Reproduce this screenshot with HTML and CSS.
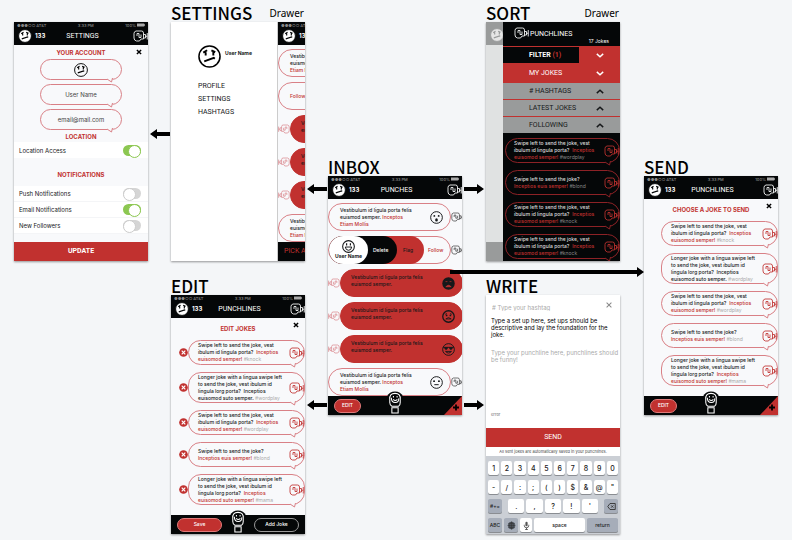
FILE: index.html
```
<!DOCTYPE html>
<html lang="en">
<head>
<meta charset="utf-8">
<title>Punchlines app flow</title>
<link rel="stylesheet" href="styles.css">
</head>
<body>
<svg class="defs" aria-hidden="true">
  <symbol id="meh" viewBox="0 0 24 24"><circle cx="12" cy="12" r="11" fill="var(--face,none)" stroke="currentColor" stroke-width="1.6"/><path d="M5.500 8l4-2.500M14 5.500l4 2M6.500 17l10-3.500 1 .8M8 7.500v3.500M16 7v4" fill="none" stroke="currentColor" stroke-width="2"/></symbol>
  <symbol id="smile" viewBox="0 0 24 24"><circle cx="12" cy="12" r="10.800" fill="none" stroke="currentColor" stroke-width="2"/><path d="M6 13h12q-1 6-6 6t-6-6z" fill="none" stroke="currentColor" stroke-width="1.800"/><path d="M8.500 6v4M15.500 6v4" stroke="currentColor" stroke-width="2.200"/></symbol>
  <symbol id="wow" viewBox="0 0 24 24"><circle cx="12" cy="12" r="10.800" fill="none" stroke="currentColor" stroke-width="1.800"/><ellipse cx="12" cy="16.500" rx="2.500" ry="3" fill="currentColor"/><circle cx="8" cy="9" r="1.700" fill="currentColor"/><circle cx="16" cy="9" r="1.700" fill="currentColor"/></symbol>
  <symbol id="flat" viewBox="0 0 24 24"><circle cx="12" cy="12" r="10.800" fill="none" stroke="currentColor" stroke-width="1.800"/><path d="M8 16h8" stroke="currentColor" stroke-width="1.800"/><circle cx="7.500" cy="9.500" r="1.800" fill="currentColor"/><circle cx="16.500" cy="9.500" r="1.800" fill="currentColor"/></symbol>
  <symbol id="dark" viewBox="0 0 24 24"><circle cx="12" cy="12" r="11.500" fill="currentColor"/><path d="M6.500 8.500h3.500M14 8.500h3.500M7 18q5-5.500 10 0z" fill="#c1312f" stroke="#c1312f" stroke-width="1.300"/></symbol>
  <symbol id="worried" viewBox="0 0 24 24"><circle cx="12" cy="12" r="10.600" fill="none" stroke="currentColor" stroke-width="2.400"/><path d="M6 8l3-1.500M15 6.500l3 1.500M7 16.500q5-5 10 0z" fill="none" stroke="currentColor" stroke-width="1.600"/><circle cx="8.500" cy="10" r="1.600" fill="currentColor"/><circle cx="15.500" cy="10" r="1.600" fill="currentColor"/></symbol>
  <symbol id="cool" viewBox="0 0 24 24"><circle cx="12" cy="12" r="10.800" fill="none" stroke="currentColor" stroke-width="1.800"/><path d="M2 8h20M6.500 15.500q5.500 6 11 0z" fill="none" stroke="currentColor" stroke-width="1.700"/><path d="M4 8h7q0 5-3.500 5T4 8zM13 8h7q0 5-3.500 5T13 8z" fill="currentColor"/></symbol>
  <symbol id="fist" viewBox="0 0 30 24"><path d="M6 2h11q4 0 4 4v12h-5l-3 4H7q-5-1-5-6V7q0-4 4-5zM8 12V7h4v8h4V9M21 9h4v7h-4M28.500 6v13M25 12.500h3.500" fill="none" stroke="currentColor" stroke-width="1.700" stroke-linejoin="round"/></symbol>
  <symbol id="glove" viewBox="0 0 30 44"><path d="M0 10Q4 1 15 1t15 9v10H0z" fill="#050708"/><path d="M5 16Q4 4.500 15 4.500T25 16v6q0 5-3 7H9q-4-2-4-7zM9 32h12v10H9z" fill="#050708" stroke="#fff" stroke-width="2"/><path d="M8 13q0 9 7.500 9T22 14M12 9.500v3M19 9.500v3M11.500 16q4 4 8 0" fill="none" stroke="#fff" stroke-width="2"/></symbol>
  <symbol id="tail" viewBox="0 0 6 5"><path d="M0 0h6v1.500H0z" fill="var(--paper)"/><path d="M0 1l4.500 3L5.500 0" fill="var(--paper)" stroke="currentColor" stroke-width="1"/></symbol>
  <symbol id="cross" viewBox="0 0 10 10"><path d="M1.500 1.500l7 7M8.500 1.500l-7 7" stroke="currentColor" stroke-width="2.400"/></symbol>
  <symbol id="thin-cross" viewBox="0 0 10 10"><path d="M1 1l8 8M9 1l-8 8" stroke="currentColor" stroke-width="1.700"/></symbol>
  <symbol id="remove" viewBox="0 0 10 10"><circle cx="5" cy="5" r="4.800" fill="#c1312f"/><path d="M3 3l4 4M7 3l-4 4" stroke="#fff" stroke-width="1.300"/></symbol>
  <symbol id="down" viewBox="0 0 10 6"><path d="M1 1l4 3.500L9 1" fill="none" stroke="currentColor" stroke-width="1.800"/></symbol>
  <symbol id="up" viewBox="0 0 10 6"><path d="M1 5l4-3.500L9 5" fill="none" stroke="currentColor" stroke-width="1.800"/></symbol>
  <symbol id="battery" viewBox="0 0 10 4"><path d="M0 0h9v4H0zM9 1h1v2H9z" fill="#aaa"/></symbol>
</svg>

<main class="board">

  <section class="node account">
    <div class="phone">
      <header class="bar">
        <div class="status"><span>●●●○○ AT&amp;T</span><span>3:33 PM</span><span>100% <svg class="battery"><use href="#battery"/></svg></span></div>
        <div class="nav"><svg class="avatar"><use href="#meh"/></svg><b>133</b><h3>SETTINGS</h3><svg class="fist"><use href="#fist"/></svg></div>
      </header>
      <form class="content">
        <div class="heading"><h4>YOUR ACCOUNT</h4><button type="button" class="close" aria-label="Close"><svg><use href="#cross"/></svg></button></div>
        <div class="fields">
          <div class="bubble field"><svg class="face"><use href="#meh"/></svg><svg class="tail"><use href="#tail"/></svg></div>
          <div class="bubble field"><input type="text" value="User Name" aria-label="User name"><svg class="tail"><use href="#tail"/></svg></div>
          <div class="bubble field"><input type="text" value="email@mail.com" aria-label="Email"><svg class="tail"><use href="#tail"/></svg></div>
        </div>
        <h4 class="location">LOCATION</h4>
        <label class="switch"><span>Location Access</span><input type="checkbox" checked></label>
        <h4 class="notifications">NOTIFICATIONS</h4>
        <div class="switches">
          <label class="switch"><span>Push Notifications</span><input type="checkbox"></label>
          <label class="switch"><span>Email Notifications</span><input type="checkbox" checked></label>
          <label class="switch"><span>New Followers</span><input type="checkbox"></label>
        </div>
        <button type="button" class="wide strong">UPDATE</button>
      </form>
    </div>
  </section>

  <section class="node drawer">
    <div class="title"><h2>SETTINGS</h2><span>Drawer</span></div>
    <div class="phone split">
      <nav class="menu">
        <div class="user"><svg><use href="#meh"/></svg><b>User Name</b></div>
        <a href="#">PROFILE</a><a href="#">SETTINGS</a><a href="#">HASHTAGS</a>
      </nav>
      <div class="peek">
        <header class="bar">
          <div class="status"><span>●●●○○ AT&amp;T</span></div>
          <div class="nav"><svg class="avatar"><use href="#meh"/></svg><b>133</b></div>
        </header>
        <div class="content punches">
          <div class="punch"><p>Vestibulum<br>euismod<br><em>Etiam Mollis</em></p></div>
          <div class="punch"><p><em>Follow</em></p></div>
          <div class="punch red"><svg class="fist"><use href="#fist"/></svg><p>Vestibulum<br>euismod</p></div>
          <div class="punch red"><svg class="fist"><use href="#fist"/></svg><p>Vestibulum<br>euismod</p></div>
          <div class="punch red"><svg class="fist"><use href="#fist"/></svg><p>Vestibulum<br>euismod</p></div>
          <div class="punch"><p>Vestibulum<br>euismod<br><em>Etiam Mollis</em></p></div>
        </div>
        <footer class="foot pick">PICK A</footer>
      </div>
    </div>
  </section>

  <section class="node sort">
    <div class="title"><h2>SORT</h2><span>Drawer</span></div>
    <div class="phone split">
      <div class="shade"><div class="shade-top"><svg class="avatar"><use href="#meh"/></svg></div><div class="shade-foot"></div></div>
      <div class="panel">
        <header class="panel-head"><svg class="fist"><use href="#fist"/></svg><h3>PUNCHLINES</h3><span>17 Jokes</span></header>
        <button type="button" class="option filter"><span>FILTER <em>(1)</em></span><i><svg><use href="#down"/></svg></i></button>
        <button type="button" class="option mine"><span>MY JOKES</span><i><svg><use href="#down"/></svg></i></button>
        <button type="button" class="option"><span># HASHTAGS</span><i><svg><use href="#up"/></svg></i></button>
        <button type="button" class="option"><span>LATEST JOKES</span><i><svg><use href="#up"/></svg></i></button>
        <button type="button" class="option"><span>FOLLOWING</span><i><svg><use href="#up"/></svg></i></button>
        <ul class="jokes">
          <li class="bubble"><p>Swipe left to send the joke, vest<br>ibulum id lingula porta? &nbsp;<em>Inceptios<br>euisomod semper!</em> <a href="#">#wordplay</a></p><svg class="fist"><use href="#fist"/></svg><svg class="tail"><use href="#tail"/></svg></li>
          <li class="bubble"><p>Swipe left to send the joke?<br><em>Inceptios euis semper!</em> <a href="#">#blond</a></p><svg class="fist"><use href="#fist"/></svg><svg class="tail"><use href="#tail"/></svg></li>
          <li class="bubble"><p>Swipe left to send the joke, vest<br>ibulum id lingula porta? &nbsp;<em>Inceptios<br>euisomod semper!</em> <a href="#">#knock</a></p><svg class="fist"><use href="#fist"/></svg><svg class="tail"><use href="#tail"/></svg></li>
          <li class="bubble"><p>Swipe left to send the joke, vest<br>ibulum id lingula porta? &nbsp;<em>Inceptios<br>euisomod semper!</em> <a href="#">#knock</a></p><svg class="fist"><use href="#fist"/></svg><svg class="tail"><use href="#tail"/></svg></li>
        </ul>
      </div>
    </div>
  </section>

  <section class="node inbox">
    <div class="title"><h2>INBOX</h2></div>
    <div class="phone">
      <header class="bar">
        <div class="status"><span>●●●○○ AT&amp;T</span><span>3:33 PM</span><span>100% <svg class="battery"><use href="#battery"/></svg></span></div>
        <div class="nav"><svg class="avatar"><use href="#meh"/></svg><b>133</b><h3>PUNCHES</h3><svg class="fist"><use href="#fist"/></svg></div>
      </header>
      <div class="content punches">
        <div class="punch"><p>Vestibulum id ligula porta felis<br>euismod semper. <em>Inceptos<br>Etiam Mollis</em></p><svg class="face"><use href="#wow"/></svg><svg class="fist"><use href="#fist"/></svg></div>
        <div class="punch actions">
          <button type="button" class="follow">Follow</button>
          <button type="button" class="flag">Flag</button>
          <button type="button" class="delete">Delete</button>
          <div class="who"><svg><use href="#smile"/></svg><b>User Name</b></div>
          <svg class="fist"><use href="#fist"/></svg>
        </div>
        <div class="punch red"><svg class="fist"><use href="#fist"/></svg><p>Vestibulum id ligula porta felis<br>euismod semper.</p><svg class="face"><use href="#dark"/></svg></div>
        <div class="punch red"><svg class="fist"><use href="#fist"/></svg><p>Vestibulum id ligula porta felis<br>euismod semper.</p><svg class="face"><use href="#worried"/></svg></div>
        <div class="punch red"><svg class="fist"><use href="#fist"/></svg><p>Vestibulum id ligula porta felis<br>euismod semper.</p><svg class="face"><use href="#cool"/></svg></div>
        <div class="punch"><p>Vestibulum id ligula porta felis<br>euismod semper. <em>Inceptos<br>Etiam Mollis</em></p><svg class="face"><use href="#flat"/></svg><svg class="fist"><use href="#fist"/></svg></div>
      </div>
      <footer class="foot"><button type="button" class="pill small">EDIT</button><svg class="glove"><use href="#glove"/></svg><button type="button" class="add" aria-label="Add"><svg viewBox="0 0 18 19"><path d="M18 0v19H0z" fill="#c1312f"/><path d="M12 8.500v6M9 11.500h6" stroke="#000" stroke-width="1.800"/></svg></button></footer>
    </div>
  </section>

  <section class="node send">
    <div class="title"><h2>SEND</h2></div>
    <div class="phone">
      <header class="bar">
        <div class="status"><span>●●●○○ AT&amp;T</span><span>3:33 PM</span><span>100% <svg class="battery"><use href="#battery"/></svg></span></div>
        <div class="nav"><svg class="avatar"><use href="#meh"/></svg><b>133</b><h3>PUNCHLINES</h3><svg class="fist"><use href="#fist"/></svg></div>
      </header>
      <div class="content">
        <div class="heading low"><h4>CHOOSE A JOKE TO SEND</h4><button type="button" class="close" aria-label="Close"><svg><use href="#cross"/></svg></button></div>
        <ul class="jokes">
          <li class="bubble"><p>Swipe left to send the joke, vest<br>ibulum id lingula porta? &nbsp;<em>Inceptios<br>euisomod semper!</em> <a href="#">#knock</a></p><svg class="fist"><use href="#fist"/></svg><svg class="tail"><use href="#tail"/></svg></li>
          <li class="bubble tall"><p>Longer joke with a lingua swipe left<br>to send the joke, vest ibulum id<br>lingula lorg porta? &nbsp;Inceptios<br>euisomod suto semper. <a href="#">#wordplay</a></p><svg class="fist"><use href="#fist"/></svg><svg class="tail"><use href="#tail"/></svg></li>
          <li class="bubble"><p>Swipe left to send the joke, vest<br>ibulum id lingula porta? &nbsp;<em>Inceptios<br>euisomod semper!</em> <a href="#">#wordplay</a></p><svg class="fist"><use href="#fist"/></svg><svg class="tail"><use href="#tail"/></svg></li>
          <li class="bubble"><p>Swipe left to send the joke?<br><em>Inceptios euis semper!</em> <a href="#">#blond</a></p><svg class="fist"><use href="#fist"/></svg><svg class="tail"><use href="#tail"/></svg></li>
          <li class="bubble tall"><p>Longer joke with a lingua swipe left<br>to send the joke, vest ibulum id<br>lingula lorg porta? &nbsp;<em>Inceptios<br>euisomod suto semper!</em> <a href="#">#mama</a></p><svg class="fist"><use href="#fist"/></svg><svg class="tail"><use href="#tail"/></svg></li>
        </ul>
      </div>
      <footer class="foot"><button type="button" class="pill small">EDIT</button><svg class="glove"><use href="#glove"/></svg><button type="button" class="add" aria-label="Add"><svg viewBox="0 0 18 19"><path d="M18 0v19H0z" fill="#c1312f"/><path d="M12 8.500v6M9 11.500h6" stroke="#000" stroke-width="1.800"/></svg></button></footer>
    </div>
  </section>

  <section class="node edit">
    <div class="title"><h2>EDIT</h2></div>
    <div class="phone">
      <header class="bar">
        <div class="status"><span>●●●○○ AT&amp;T</span><span>3:33 PM</span><span>100% <svg class="battery"><use href="#battery"/></svg></span></div>
        <div class="nav"><svg class="avatar"><use href="#meh"/></svg><b>133</b><h3>PUNCHLINES</h3><svg class="fist"><use href="#fist"/></svg></div>
      </header>
      <div class="content">
        <div class="heading low"><h4>EDIT JOKES</h4><button type="button" class="close" aria-label="Close"><svg><use href="#cross"/></svg></button></div>
        <ul class="jokes">
          <li class="bubble"><button type="button" class="remove" aria-label="Remove"><svg><use href="#remove"/></svg></button><p>Swipe left to send the joke, vest<br>ibulum id lingula porta? &nbsp;<em>Inceptios<br>euisomod semper!</em> <a href="#">#knock</a></p><svg class="fist"><use href="#fist"/></svg><svg class="tail"><use href="#tail"/></svg></li>
          <li class="bubble tall"><button type="button" class="remove" aria-label="Remove"><svg><use href="#remove"/></svg></button><p>Longer joke with a lingua swipe left<br>to send the joke, vest ibulum id<br>lingula lorg porta? &nbsp;Inceptios<br>euisomod suto semper. <a href="#">#wordplay</a></p><svg class="fist"><use href="#fist"/></svg><svg class="tail"><use href="#tail"/></svg></li>
          <li class="bubble"><button type="button" class="remove" aria-label="Remove"><svg><use href="#remove"/></svg></button><p>Swipe left to send the joke, vest<br>ibulum id lingula porta? &nbsp;<em>Inceptios<br>euisomod semper!</em> <a href="#">#wordplay</a></p><svg class="fist"><use href="#fist"/></svg><svg class="tail"><use href="#tail"/></svg></li>
          <li class="bubble"><button type="button" class="remove" aria-label="Remove"><svg><use href="#remove"/></svg></button><p>Swipe left to send the joke?<br><em>Inceptios euis semper!</em> <a href="#">#blond</a></p><svg class="fist"><use href="#fist"/></svg><svg class="tail"><use href="#tail"/></svg></li>
          <li class="bubble tall"><button type="button" class="remove" aria-label="Remove"><svg><use href="#remove"/></svg></button><p>Longer joke with a lingua swipe left<br>to send the joke, vest ibulum id<br>lingula lorg porta? &nbsp;<em>Inceptios<br>euisomod suto semper!</em> <a href="#">#mama</a></p><svg class="fist"><use href="#fist"/></svg><svg class="tail"><use href="#tail"/></svg></li>
        </ul>
      </div>
      <footer class="foot"><button type="button" class="pill">Save</button><svg class="glove"><use href="#glove"/></svg><button type="button" class="pill outline">Add Joke</button></footer>
    </div>
  </section>

  <section class="node write">
    <div class="title"><h2>WRITE</h2></div>
    <form class="phone">
      <div class="tag"><input type="text" placeholder="# Type your hashtag" aria-label="Hashtag"><button type="button" class="close" aria-label="Close"><svg><use href="#thin-cross"/></svg></button></div>
      <textarea class="setup" aria-label="Set up">Type a set up here, set ups should be descriptive and lay the foundation for the joke.</textarea>
      <textarea class="line" aria-label="Punchline" placeholder="Type your punchline here, punchlines should be funny!"></textarea>
      <p class="error">error</p>
      <button type="button" class="wide">SEND</button>
      <p class="note">All sent jokes are automatically saved in your punchlines.</p>
      <div class="keys">
        <div class="keyrow"><button type="button">1</button><button type="button">2</button><button type="button">3</button><button type="button">4</button><button type="button">5</button><button type="button">6</button><button type="button">7</button><button type="button">8</button><button type="button">9</button><button type="button">0</button></div>
        <div class="keyrow"><button type="button">-</button><button type="button">/</button><button type="button">:</button><button type="button">;</button><button type="button">(</button><button type="button">)</button><button type="button">$</button><button type="button">&amp;</button><button type="button">@</button><button type="button">"</button></div>
        <div class="keyrow third"><button type="button" class="mod">#+=</button><div class="keyrow"><button type="button">.</button><button type="button">,</button><button type="button">?</button><button type="button">!</button><button type="button">'</button></div><button type="button" class="mod" aria-label="Backspace"><svg viewBox="0 0 12 10"><path d="M4 1h7v8H4L1 5zM5.500 3.500l3 3M8.500 3.500l-3 3" fill="none" stroke="#333" stroke-width="1.200"/></svg></button></div>
        <div class="keyrow fourth"><button type="button" class="mod">ABC</button><button type="button" class="mod" aria-label="Language"><svg viewBox="0 0 12 12"><circle cx="6" cy="6" r="5" fill="#59606b"/><path d="M1 6h10M6 1v10M6 1q-5 5 0 10M6 1q5 5 0 10M2 3.500h8M2 8.500h8" fill="none" stroke="#333" stroke-width=".8"/></svg></button><button type="button" class="mic" aria-label="Dictate"><svg viewBox="0 0 12 12"><rect x="4.500" y="1" width="3" height="6" rx="1.500" fill="#555"/><path d="M3 5v1q0 3 3 3t3-3V5M6 9v2.500M4 11.500h4" fill="none" stroke="#333"/></svg></button><button type="button" class="space">space</button><button type="button" class="mod return">return</button></div>
      </div>
    </form>
  </section>

  <svg class="arrow a1" viewBox="0 0 20 10"><path d="M0 5l7-5v3h13v4H7v3z"/></svg>
  <svg class="arrow a2" viewBox="0 0 20 10"><path d="M0 5l7-5v3h13v4H7v3z"/></svg>
  <svg class="arrow a3" viewBox="0 0 20 10"><path d="M20 5l-7-5v3H0v4h13v3z"/></svg>
  <svg class="arrow a4" viewBox="0 0 194 10"><path d="M194 5l-7-5v3H0v4h187v3z"/></svg>
  <svg class="arrow a5" viewBox="0 0 20 10"><path d="M0 5l7-5v3h13v4H7v3z"/></svg>
  <svg class="arrow a6" viewBox="0 0 20 10"><path d="M20 5l-7-5v3H0v4h13v3z"/></svg>
</main>
</body>
</html>
```

FILE: styles.css
```
:root {
  --red: #c1312f;
  --ink: #050708;
  --paper: #f8f9fb;
  --line: #d98086;
  --caps: Roboto, "Liberation Sans", sans-serif;
}
* { box-sizing: border-box; margin: 0; padding: 0; }
body {
  background: #f4f6f8;
  color: #16181a;
  font: 500 5px/7px Inter, "Open Sans", sans-serif;
}
button, input, textarea { font: inherit; color: inherit; background: none; border: 0; border-radius: 0; outline: 0; }
button { white-space: nowrap; }
a { color: inherit; text-decoration: none; }
em { font-style: normal; color: var(--red); }
ul { list-style: none; }
svg { display: block; flex: none; }
.defs { position: absolute; width: 0; height: 0; }

/* canvas */
.board { position: relative; min-height: 540px; overflow: hidden; }
.node { position: absolute; width: 134px; }
.account { left: 14px; top: 22px; }
.drawer { left: 171px; top: 4px; }
.sort { left: 486px; top: 4px; }
.inbox { left: 328px; top: 158px; }
.send { left: 644px; top: 158px; }
.edit { left: 171px; top: 277px; }
.write { left: 486px; top: 277px; }
.title { display: flex; justify-content: space-between; align-items: center; height: 18px; padding-right: 1px; color: #000; }
.title h2 { font: 500 17px/18px "Noto Sans CJK SC", "Noto Sans", sans-serif; }
.title span { font: 10px/18px "Noto Sans", sans-serif; }
.phone { display: flex; flex-direction: column; height: 239px; background: var(--paper); box-shadow: 0 1px 2px #0006; overflow: hidden; }
.arrow { position: absolute; width: 20px; height: 10px; fill: #000; }
.a1 { left: 150px; top: 129px; }
.a2 { left: 307px; top: 184px; }
.a3 { left: 464px; top: 184px; }
.a4 { left: 450px; top: 267px; width: 194px; }
.a5 { left: 307px; top: 400px; }
.a6 { left: 464px; top: 400px; }

/* app bar */
.bar { flex: none; height: 23px; background: var(--ink); color: #fff; overflow: hidden; }
.status { display: flex; justify-content: space-between; padding: 1px 3px 0; font-size: 4px; line-height: 5px; color: #888; white-space: nowrap; }
.status span { display: flex; gap: 1px; }
.battery { width: 8px; height: 4px; }
.nav { display: grid; grid-template-columns: 14px 14px 1fr 32px; gap: 3px; align-items: center; height: 16px; padding-left: 4px; line-height: 8px; }
.nav b { font-size: 6px; }
h3 { font: 400 7px/8px var(--caps); }
.nav h3 { text-align: center; }
.nav .fist { justify-self: end; }
.avatar { width: 14px; height: 14px; color: var(--ink); --face: #fff; }
.fist { width: 15px; height: 12px; }

/* content */
.content { display: flex; flex-direction: column; flex: 1; min-height: 0; }
h4 { font-size: 6px; line-height: 8px; font-weight: 700; color: var(--red); text-align: center; }
.heading { display: grid; grid-template-columns: 1fr; padding: 4px 6px 0; height: 14px; }
.heading > * { grid-area: 1 / 1; }
.low h4 { padding-top: 3px; }
.close { justify-self: end; width: 6px; height: 6px; }
.close svg { width: 6px; height: 6px; color: #000; }
.bubble { position: relative; display: flex; align-items: center; height: 25px; border: 1px solid var(--line); border-radius: 13px; color: #16181a; }
.bubble p { flex: 1; min-width: 0; white-space: nowrap; }
.bubble a { color: #aaa; font-weight: 400; }
.tail { position: absolute; right: 8px; bottom: -4px; width: 6px; height: 5px; color: var(--line); }
.wide { flex: none; height: 19px; background: var(--red); color: #fff; font: 400 7px/19px var(--caps); }
.strong { font-weight: 700; }

/* account */
.fields { display: grid; gap: 4px; padding: 0 26px; }
.field { height: 21px; justify-content: center; }
.field input { width: 100%; text-align: center; font-size: 6px; font-weight: 400; color: #444; }
.field .face { width: 14px; height: 14px; color: #000; }
.location { padding: 3px 0 1px; }
.switch { display: flex; align-items: center; justify-content: space-between; height: 16px; padding: 0 7px 0 5px; background: #fff; font-size: 6px; font-weight: 400; }
.switch input { appearance: none; width: 18px; height: 11px; padding: 0; border-radius: 6px; background: #d5d5d5; display: flex; }
.switch input::before { content: ""; width: 11px; height: 11px; border-radius: 50%; background: #fff; border: 1px solid #ccc; }
.switch input:checked { background: #8cc751; justify-content: flex-end; }
.switch input:checked::before { border-color: #8cc751; }
.notifications { padding: 13px 0 7px; }
.switches { display: grid; margin-bottom: auto; }
.switches .switch { border-bottom: 1px solid #f4f5f7; }

/* settings drawer */
.split { flex-direction: row; }
.menu { width: 107px; padding: 23px 0 0 27px; background: #fff; border-right: 1px solid #ccc; display: flex; flex-direction: column; font: 400 7px/13px var(--caps); }
.user { display: flex; gap: 4px; padding-bottom: 12px; font: 5px/16px Inter, sans-serif; }
.user svg { width: 23px; height: 23px; color: #000; }
.peek { flex: 1; min-width: 0; display: flex; flex-direction: column; overflow: hidden; }
.peek .bar, .peek .punches { width: 134px; }
.pick { color: var(--red); font: 400 7px/19px var(--caps); white-space: nowrap; }

/* punches */
.punches { gap: 5px; padding-top: 4px; overflow: hidden; }
.punch { position: relative; flex: none; display: flex; align-items: center; height: 28px; width: 123px; border: 1px solid var(--line); border-radius: 14px; padding-left: 11px; white-space: nowrap; background: var(--paper); }
.punch p { flex: 1; padding-top: 1px; }
.punch .face { width: 13px; height: 13px; margin-right: 7px; }
.punch .fist { position: absolute; left: 122px; width: 12px; height: 10px; color: #333; }
.punch.red { margin-left: 12px; padding-left: 10px; background: var(--red); border-color: var(--red); color: #16181a; }
.punch.red .fist { left: -13px; color: var(--line); transform: scaleX(-1); }
.punch.red p { padding: 0 0 4px; }
.actions { padding: 0; }
.actions > button, .who { position: absolute; inset: -1px auto -1px 0; border-radius: 14px; }
.actions > .follow { width: 122px; padding-left: 99px; text-align: left; color: var(--red); }
.actions > .flag { width: 95px; padding-left: 74px; text-align: left; background: var(--red); }
.actions > .delete { width: 68px; padding-left: 44px; text-align: left; background: var(--ink); color: #fff; }
.who { width: 39px; display: grid; place-items: center; align-content: center; background: #fff; }
.who svg { width: 13px; height: 13px; }

/* footer */
.foot { position: relative; flex: none; display: flex; align-items: center; justify-content: space-between; height: 19px; padding: 0 6px; background: var(--ink); }
.pill { width: 45px; height: 14px; border-radius: 7px; border: 1px solid #e07b7b; background: var(--red); color: #fff; }
.small { width: 27px; }
.outline { background: none; border-color: #999; }
.glove { position: absolute; left: 59px; top: -5px; width: 16px; height: 23px; }
.add { align-self: stretch; width: 18px; margin-right: -6px; }

/* joke lists */
.jokes { display: grid; align-content: start; gap: 7px; padding: 8px 0 0 17px; }
.jokes .bubble { padding-left: 9px; }
.jokes .tall { height: 31px; }
.jokes .fist { color: var(--red); }
.remove { position: absolute; left: -10px; width: 9px; height: 9px; }
.remove svg { width: 9px; height: 9px; }

/* sort drawer */
.shade { width: 17px; display: flex; flex-direction: column; justify-content: space-between; background: #e0e2e2; overflow: hidden; }
.shade-top { height: 23px; padding: 6px 0 0 4px; background: #999b9b; }
.shade-top .avatar { color: #999b9b; --face: #e6e6e6; }
.shade-foot { height: 19px; background: #999b9b; }
.panel { flex: 1; min-width: 0; display: flex; flex-direction: column; background: var(--ink); --paper: #050708; --line: #8d2226; color: #ddd; }
.panel-head { display: flex; height: 24px; padding: 5px 11px 0; gap: 1px; color: #fff; }
.panel-head h3 { flex: 1; line-height: 14px; }
.panel-head span { align-self: end; line-height: 9px; font-weight: 400; }
.option { display: grid; grid-template-columns: 1fr 41px; align-items: center; height: 17px; border-top: 1px solid var(--red); background: #999b9b; color: #16181a; font: 400 7px/16px var(--caps); text-align: left; }
.option span { padding-left: 26px; }
.option i { display: grid; place-items: center; align-self: stretch; }
.option svg { width: 8px; height: 5px; }
.filter { background: var(--ink); color: #fff; font-weight: 700; }
.filter i, .mine { background: var(--red); color: #fff; }
.mine { height: 19px; }
.panel .jokes { padding: 5px 0 0 2px; }
.panel .bubble { padding-left: 8px; color: #ddd; }
.panel .bubble a { color: #888; }

/* write */
.write .phone { background: #fff; }
.tag { display: flex; align-items: center; padding: 5px 8px 0 6px; height: 20px; }
.tag input { flex: 1; min-width: 0; font-size: 6px; font-weight: 400; }
.tag .close { margin-bottom: 5px; }
.tag .close svg { color: #888; }
::placeholder { color: #aaa; opacity: 1; }
textarea { resize: none; overflow: hidden; padding: 0 0 0 5px; font-size: 6px; line-height: 7px; font-weight: 400; }
.setup { height: 34px; padding-top: 2px; color: #000; }
.line { flex: 1; }
.error { padding: 0 5px; height: 17px; font-size: 4px; color: #888; }
.note { height: 9px; line-height: 9px; font-size: 4px; font-weight: 400; text-align: center; color: #444; }
.keys { display: grid; gap: 5px; padding: 5px 2px 2px; background: #cbcfd5; }
.keyrow { display: flex; gap: 2px; }
.keyrow button { flex: 1; min-width: 0; height: 14px; border-radius: 2px; background: #fff; box-shadow: 0 1px 0 #8a8d92; color: #222; font-size: 7px; display: grid; place-items: center; }
.keyrow .mod { flex: 0 0 14px; background: #a6adb9; font-size: 5px; }
.keyrow svg { width: 9px; height: 9px; }
.third { gap: 6px; }
.third .keyrow { flex: 1; }
.keyrow .mic { flex: 0 0 12px; }
.keyrow .space { font-size: 5px; }
.keyrow .return { flex-basis: 31px; }
```
